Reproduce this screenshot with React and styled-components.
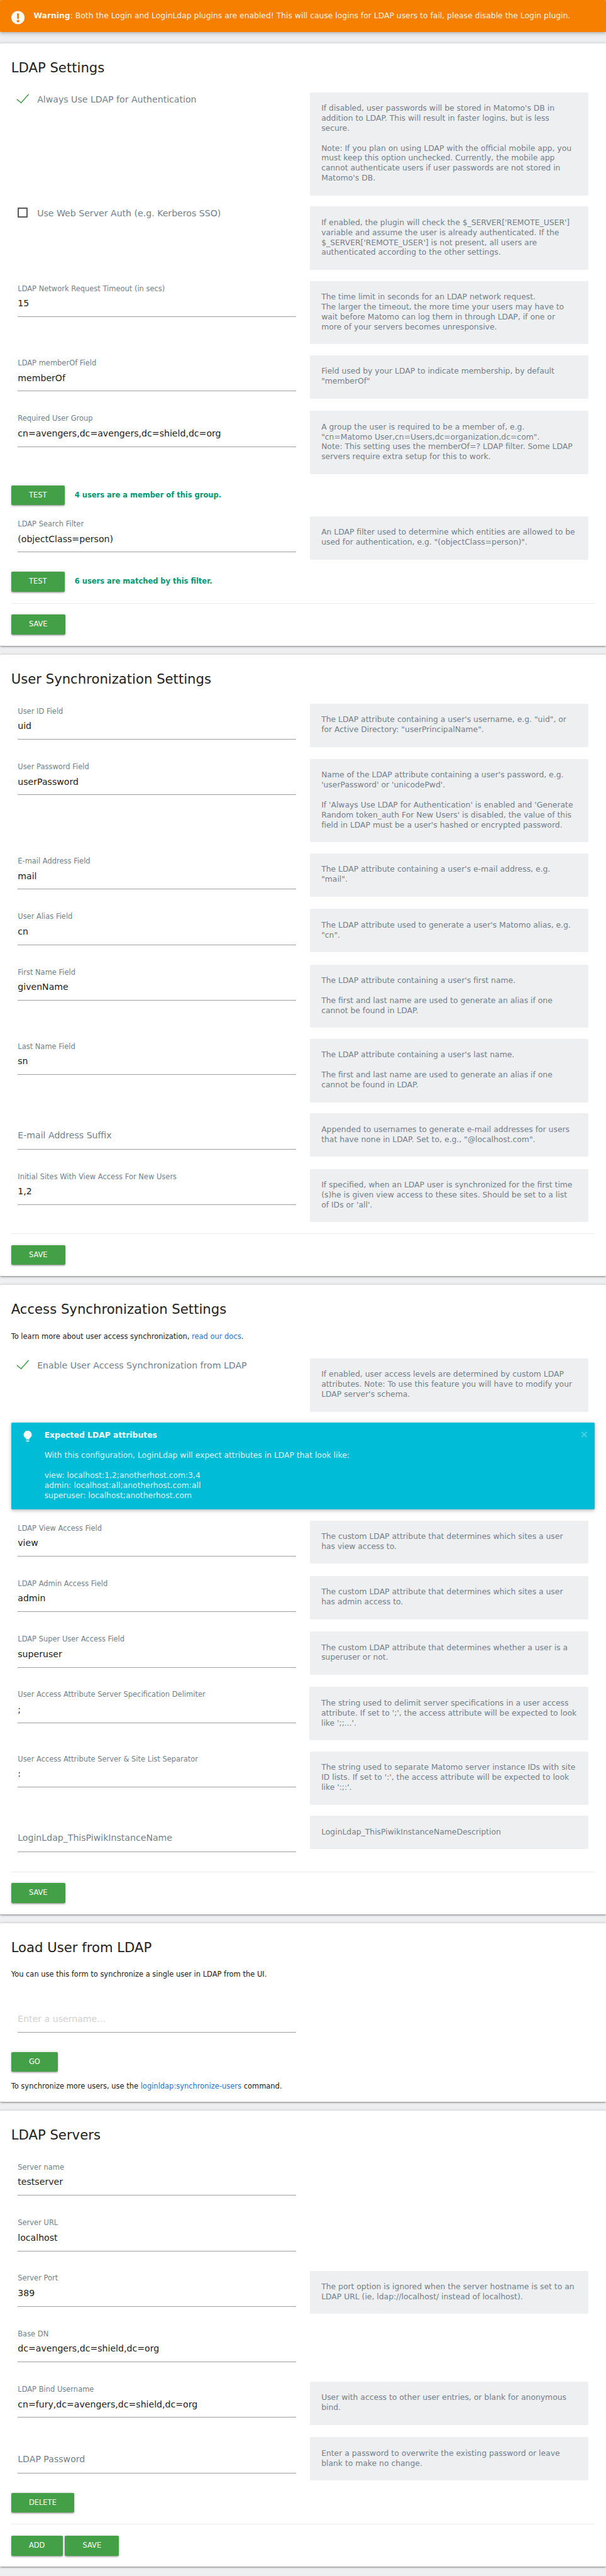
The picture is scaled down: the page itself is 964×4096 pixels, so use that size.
import React from 'react';
import styled, { createGlobalStyle } from 'styled-components';

const GlobalStyle = createGlobalStyle`
  *, *::before, *::after { box-sizing: border-box; }
  html, body { margin: 0; padding: 0; background: #eeeff1; }
  body { overflow-x: hidden; }
`;

const Page = styled.main`
  zoom: 0.8831;
  display: flex;
  flex-direction: column;
  padding-bottom: 16px;
  background: #eeeff1;
  color: #212121;
  font: 400 13px/18px "DejaVu Sans", Verdana, sans-serif;
`;

const Banner = styled.div`
  display: flex;
  align-items: flex-start;
  height: 58px;
  margin-bottom: 20px;
  padding: 19px 20px 0;
  border-radius: 2px;
  background: #f77f00;
  color: rgba(255, 255, 255, 0.93);
  box-shadow: 0 2px 5px rgba(0, 0, 0, 0.16), 0 2px 10px rgba(0, 0, 0, 0.12);
  font-size: 14px;
  line-height: 19px;
  white-space: nowrap;
`;

const BannerIcon = styled.svg`
  flex: none;
  width: 24px;
  height: 25px;
  margin-right: 16.5px;
`;

const Card = styled.section`
  padding: 0 20px 20px;
  border-radius: 2px;
  background: #fff;
  box-shadow: 0 2px 2px 0 rgba(0, 0, 0, 0.14), 0 3px 1px -2px rgba(0, 0, 0, 0.12),
    0 1px 5px 0 rgba(0, 0, 0, 0.2);

  & + & { margin-top: 16px; }
`;

const Title = styled.h2`
  height: 88px;
  margin: 0;
  padding-top: 29.6px;
  font-size: 24px;
  font-weight: 400;
  line-height: 29px;
`;

const Intro = styled.p`
  margin: -3.4px 0 29.4px;
`;

const Outro = styled.p`
  margin: 17.6px 0 -1.6px;
`;

const Link = styled.a`
  color: #1976d2;
  text-decoration: none;
`;

const Row = styled.div`
  display: grid;
  grid-template-columns: 1fr 1fr;
  align-items: start;
  min-height: 80px;
  margin-bottom: 20px;
`;

const Field = styled.div`
  display: flex;
  flex-direction: column;
  height: 65px;
  margin: 0 12px;
  padding-top: 5.6px;
  border-bottom: 1px solid #9e9e9e;
`;

const Label = styled.label`
  height: 18px;
  color: #727f8c;
`;

const Value = styled.span`
  margin-top: ${(p) => (p.$kind === 'label' ? 8 : 8.7)}px;
  color: ${(p) => ({ label: '#727f8c', hint: '#d1d1d1' }[p.$kind] || '#212121')};
  font-size: 16px;
`;

const Help = styled.p`
  margin: 0 12px;
  padding: 20.8px 21px 21.2px;
  border-radius: 2px;
  background: #eeeff1;
  color: #727f8c;
  font-size: 14px;
  white-space: pre;
`;

const CheckField = styled.label`
  display: flex;
  margin: 0 12px;
  color: #727f8c;
  font-size: 16px;
  line-height: 26px;
`;

const CheckMark = styled.svg`
  flex: none;
  width: 24px;
  height: 22px;
  margin: 0 13px 0 -2px;
`;

const EmptyBox = styled.span`
  flex: none;
  width: 18px;
  height: 18px;
  margin: 2px 17px 0 0;
  border: 2.3px solid #5a5a5a;
  border-radius: 1px;
`;

const Button = styled.button`
  height: 36px;
  padding: 0 32px;
  border: 0;
  border-radius: 2px;
  background: #43a047;
  color: #fff;
  box-shadow: 0 2px 2px 0 rgba(0, 0, 0, 0.14), 0 3px 1px -2px rgba(0, 0, 0, 0.12),
    0 1px 5px 0 rgba(0, 0, 0, 0.2);
  font: inherit;
  line-height: 36px;
`;

const Actions = styled.div`
  display: flex;
  gap: 4px;
  margin-bottom: ${(p) => (p.$spaced ? 20 : 0)}px;
`;

const Result = styled.strong`
  margin-left: 14.3px;
  color: #009874;
  line-height: 34.6px;
`;

const Divider = styled.hr`
  margin: 0 0 20px;
  border: 0;
  border-top: 1px solid #e8eaeb;
`;

const Notice = styled.aside`
  display: flex;
  align-items: flex-start;
  height: 156px;
  margin-bottom: 20px;
  padding: 14.5px 12px 0 22px;
  border-radius: 2px;
  background: #00bcd7;
  color: rgba(255, 255, 255, 0.9);
  box-shadow: 0 2px 5px rgba(0, 0, 0, 0.16), 0 2px 10px rgba(0, 0, 0, 0.12);
  font-size: 14px;
`;

const Bulb = styled.svg`
  flex: none;
  width: 16px;
  height: 20px;
  margin-right: 22px;
`;

const NoticeText = styled.div`
  flex: 1;
  padding-top: 0.6px;
  white-space: pre;
  strong { color: #fff; }
`;

const Close = styled.span`
  color: rgba(255, 255, 255, 0.33);
  font-size: 18px;
  font-weight: 700;
  line-height: 13px;
`;

function TextRow({ label, value, hint, help }) {
  const kind = value ? 'value' : hint ? 'hint' : 'label';
  return (
    <Row>
      <Field>
        <Label>{value ? label : ''}</Label>
        <Value $kind={kind}>{value || hint || label}</Value>
      </Field>
      {help && <Help>{help}</Help>}
    </Row>
  );
}

function CheckRow({ label, checked, help }) {
  return (
    <Row>
      <CheckField>
        {checked ? (
          <CheckMark viewBox="0 0 24 22" fill="none" stroke="#43a047" strokeWidth="1.8">
            <path d="M1 12.2 8.7 18.7 22 3.3" />
          </CheckMark>
        ) : (
          <EmptyBox />
        )}
        {label}
      </CheckField>
      <Help>{help}</Help>
    </Row>
  );
}

function Footer({ buttons }) {
  return (
    <>
      <Divider />
      <Actions>
        {buttons.map((b) => (
          <Button key={b}>{b}</Button>
        ))}
      </Actions>
    </>
  );
}

function TestRow({ result }) {
  return (
    <Actions $spaced>
      <Button>TEST</Button>
      <Result>{result}</Result>
    </Actions>
  );
}

const userFields = [
  {
    label: 'User ID Field',
    value: 'uid',
    help: `The LDAP attribute containing a user's username, e.g. "uid", or\nfor Active Directory: "userPrincipalName".`,
  },
  {
    label: 'User Password Field',
    value: 'userPassword',
    help: `Name of the LDAP attribute containing a user's password, e.g.\n'userPassword' or 'unicodePwd'.\n\nIf 'Always Use LDAP for Authentication' is enabled and 'Generate\nRandom token_auth For New Users' is disabled, the value of this\nfield in LDAP must be a user's hashed or encrypted password.`,
  },
  {
    label: 'E-mail Address Field',
    value: 'mail',
    help: `The LDAP attribute containing a user's e-mail address, e.g.\n"mail".`,
  },
  {
    label: 'User Alias Field',
    value: 'cn',
    help: `The LDAP attribute used to generate a user's Matomo alias, e.g.\n"cn".`,
  },
  {
    label: 'First Name Field',
    value: 'givenName',
    help: `The LDAP attribute containing a user's first name.\n\nThe first and last name are used to generate an alias if one\ncannot be found in LDAP.`,
  },
  {
    label: 'Last Name Field',
    value: 'sn',
    help: `The LDAP attribute containing a user's last name.\n\nThe first and last name are used to generate an alias if one\ncannot be found in LDAP.`,
  },
  {
    label: 'E-mail Address Suffix',
    help: `Appended to usernames to generate e-mail addresses for users\nthat have none in LDAP. Set to, e.g., "@localhost.com".`,
  },
  {
    label: 'Initial Sites With View Access For New Users',
    value: '1,2',
    help: `If specified, when an LDAP user is synchronized for the first time\n(s)he is given view access to these sites. Should be set to a list\nof IDs or 'all'.`,
  },
];

const accessFields = [
  {
    label: 'LDAP View Access Field',
    value: 'view',
    help: 'The custom LDAP attribute that determines which sites a user\nhas view access to.',
  },
  {
    label: 'LDAP Admin Access Field',
    value: 'admin',
    help: 'The custom LDAP attribute that determines which sites a user\nhas admin access to.',
  },
  {
    label: 'LDAP Super User Access Field',
    value: 'superuser',
    help: 'The custom LDAP attribute that determines whether a user is a\nsuperuser or not.',
  },
  {
    label: 'User Access Attribute Server Specification Delimiter',
    value: ';',
    help: `The string used to delimit server specifications in a user access\nattribute. If set to ';', the access attribute will be expected to look\nlike ';;...'.`,
  },
  {
    label: 'User Access Attribute Server & Site List Separator',
    value: ':',
    help: `The string used to separate Matomo server instance IDs with site\nID lists. If set to ':', the access attribute will be expected to look\nlike ':;:'.`,
  },
  {
    label: 'LoginLdap_ThisPiwikInstanceName',
    help: 'LoginLdap_ThisPiwikInstanceNameDescription',
  },
];

const serverFields = [
  { label: 'Server name', value: 'testserver' },
  { label: 'Server URL', value: 'localhost' },
  {
    label: 'Server Port',
    value: '389',
    help: 'The port option is ignored when the server hostname is set to an\nLDAP URL (ie, ldap://localhost/ instead of localhost).',
  },
  { label: 'Base DN', value: 'dc=avengers,dc=shield,dc=org' },
  {
    label: 'LDAP Bind Username',
    value: 'cn=fury,dc=avengers,dc=shield,dc=org',
    help: 'User with access to other user entries, or blank for anonymous\nbind.',
  },
  {
    label: 'LDAP Password',
    help: 'Enter a password to overwrite the existing password or leave\nblank to make no change.',
  },
];

export default function App() {
  return (
    <>
      <GlobalStyle />
      <Page>
        <Banner>
          <BannerIcon viewBox="0 0 24 25">
            <circle cx="12" cy="12.5" r="12" fill="#fef8ef" />
            <path d="M10.2 5h3.8l-.5 9.6h-2.8z" fill="#f77f00" />
            <circle cx="12.1" cy="18.6" r="2.3" fill="#f77f00" />
          </BannerIcon>
          <span>
            <strong>Warning</strong>: Both the Login and LoginLdap plugins are enabled! This will
            cause logins for LDAP users to fail, please disable the Login plugin.
          </span>
        </Banner>

        <Card>
          <Title>LDAP Settings</Title>
          <CheckRow
            checked
            label="Always Use LDAP for Authentication"
            help={`If disabled, user passwords will be stored in Matomo's DB in\naddition to LDAP. This will result in faster logins, but is less\nsecure.\n\nNote: If you plan on using LDAP with the official mobile app, you\nmust keep this option unchecked. Currently, the mobile app\ncannot authenticate users if user passwords are not stored in\nMatomo's DB.`}
          />
          <CheckRow
            label="Use Web Server Auth (e.g. Kerberos SSO)"
            help={`If enabled, the plugin will check the $_SERVER['REMOTE_USER']\nvariable and assume the user is already authenticated. If the\n$_SERVER['REMOTE_USER'] is not present, all users are\nauthenticated according to the other settings.`}
          />
          <TextRow
            label="LDAP Network Request Timeout (in secs)"
            value="15"
            help={`The time limit in seconds for an LDAP network request.\nThe larger the timeout, the more time your users may have to\nwait before Matomo can log them in through LDAP, if one or\nmore of your servers becomes unresponsive.`}
          />
          <TextRow
            label="LDAP memberOf Field"
            value="memberOf"
            help={`Field used by your LDAP to indicate membership, by default\n"memberOf"`}
          />
          <TextRow
            label="Required User Group"
            value="cn=avengers,dc=avengers,dc=shield,dc=org"
            help={`A group the user is required to be a member of, e.g.\n"cn=Matomo User,cn=Users,dc=organization,dc=com".\nNote: This setting uses the memberOf=? LDAP filter. Some LDAP\nservers require extra setup for this to work.`}
          />
          <TestRow result="4 users are a member of this group." />
          <TextRow
            label="LDAP Search Filter"
            value="(objectClass=person)"
            help={`An LDAP filter used to determine which entities are allowed to be\nused for authentication, e.g. "(objectClass=person)".`}
          />
          <TestRow result="6 users are matched by this filter." />
          <Footer buttons={['SAVE']} />
        </Card>

        <Card>
          <Title>User Synchronization Settings</Title>
          {userFields.map((f) => (
            <TextRow key={f.label} {...f} />
          ))}
          <Footer buttons={['SAVE']} />
        </Card>

        <Card>
          <Title>Access Synchronization Settings</Title>
          <Intro>
            To learn more about user access synchronization, <Link>read our docs</Link>.
          </Intro>
          <CheckRow
            checked
            label="Enable User Access Synchronization from LDAP"
            help={`If enabled, user access levels are determined by custom LDAP\nattributes. Note: To use this feature you will have to modify your\nLDAP server's schema.`}
          />
          <Notice>
            <Bulb viewBox="0 0 16 20" fill="#f2fcfd">
              <path d="M8 0a7.2 7.2 0 0 1 4.2 13.1L11.2 14v1.6H4.8V14l-1-.9A7.2 7.2 0 0 1 8 0z" />
              <path d="M5 17.6h6v.6L9.8 19.6H6.2L5 18.2z" />
            </Bulb>
            <NoticeText>
              <strong>Expected LDAP attributes</strong>
              {'\n\nWith this configuration, LoginLdap will expect attributes in LDAP that look like:\n\nview: localhost:1,2;anotherhost.com:3,4\nadmin: localhost:all;anotherhost.com:all\nsuperuser: localhost;anotherhost.com'}
            </NoticeText>
            <Close>×</Close>
          </Notice>
          {accessFields.map((f) => (
            <TextRow key={f.label} {...f} />
          ))}
          <Footer buttons={['SAVE']} />
        </Card>

        <Card>
          <Title>Load User from LDAP</Title>
          <Intro>You can use this form to synchronize a single user in LDAP from the UI.</Intro>
          <TextRow hint="Enter a username..." />
          <Actions>
            <Button>GO</Button>
          </Actions>
          <Outro>
            To synchronize more users, use the <Link>loginldap:synchronize-users</Link> command.
          </Outro>
        </Card>

        <Card>
          <Title>LDAP Servers</Title>
          {serverFields.map((f) => (
            <TextRow key={f.label} {...f} />
          ))}
          <Actions $spaced>
            <Button>DELETE</Button>
          </Actions>
          <Footer buttons={['ADD', 'SAVE']} />
        </Card>
      </Page>
    </>
  );
}
